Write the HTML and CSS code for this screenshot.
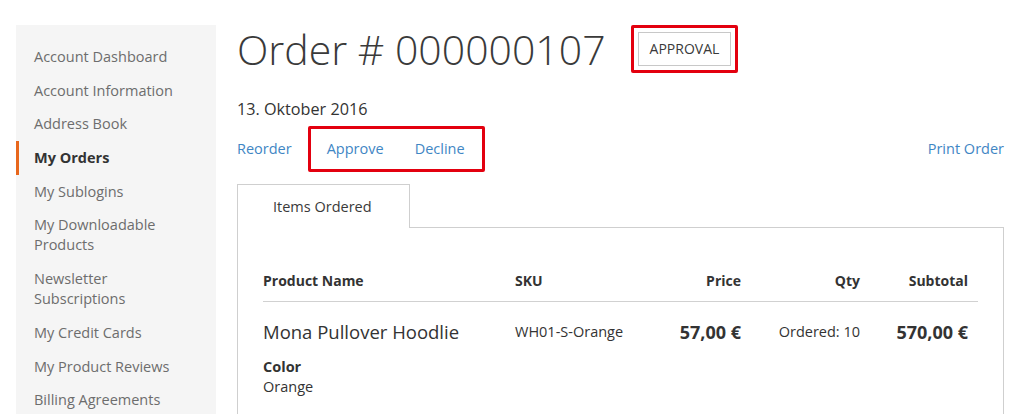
FILE: index.html
```html
<!DOCTYPE html>
<html lang="en">
<head>
<meta charset="utf-8">
<title>Order # 000000107</title>
<link rel="stylesheet" href="styles.css">
</head>
<body>
<div class="page">
  <aside class="sidebar">
    <ul class="nav">
      <li class="nav-item">Account Dashboard</li>
      <li class="nav-item">Account Information</li>
      <li class="nav-item">Address Book</li>
      <li class="nav-item active">My Orders</li>
      <li class="nav-item">My Sublogins</li>
      <li class="nav-item">My Downloadable<br>Products</li>
      <li class="nav-item">Newsletter<br>Subscriptions</li>
      <li class="nav-item">My Credit Cards</li>
      <li class="nav-item">My Product Reviews</li>
      <li class="nav-item">Billing Agreements</li>
    </ul>
  </aside>
  <main class="main">
    <div class="title-row">
      <h1 class="title">Order # 000000107</h1>
      <div class="mark badge-mark"><span class="badge">APPROVAL</span></div>
    </div>
    <div class="date">13. Oktober 2016</div>
    <div class="actions">
      <a class="link">Reorder</a>
      <div class="mark links-mark">
        <a class="link">Approve</a>
        <a class="link">Decline</a>
      </div>
      <a class="link print">Print Order</a>
    </div>
    <div class="tabs">
      <div class="tab">Items Ordered</div>
    </div>
    <div class="tab-content">
      <table class="items">
        <colgroup>
          <col class="c-name"><col class="c-sku"><col class="c-price"><col class="c-qty"><col class="c-sub">
        </colgroup>
        <thead>
          <tr>
            <th class="first">Product Name</th>
            <th>SKU</th>
            <th class="num">Price</th>
            <th class="num">Qty</th>
            <th class="num">Subtotal</th>
          </tr>
        </thead>
        <tbody>
          <tr>
            <td class="first">
              <div class="pname">Mona Pullover Hoodlie</div>
              <div class="opt-label">Color</div>
              <div class="opt-value">Orange</div>
            </td>
            <td class="sku">WH01-S-Orange</td>
            <td class="num price">57,00 €</td>
            <td class="num qty">Ordered: 10</td>
            <td class="num price">570,00 €</td>
          </tr>
        </tbody>
      </table>
    </div>
  </main>
</div>
</body>
</html>
```

FILE: styles.css
```css
* { box-sizing: border-box; }
html, body { margin: 0; padding: 0; background: #fff; }
body {
  font-family: "Open Sans", "DejaVu Sans", sans-serif;
  color: #333;
  font-size: 14.5px;
  line-height: 20px;
  overflow: hidden;
  height: 414px;
}
.page {
  display: flex;
  gap: 21px;
  padding: 25px 20px 0 16px;
}
.sidebar {
  width: 200px;
  flex: none;
  background: #f5f5f5;
  padding: 15px 0 20px;
}
.nav { list-style: none; margin: 0; padding: 0; }
.nav-item {
  padding: 7px 10px 6.7px 15px;
  color: #6d6d6d;
  font-size: 14.5px;
  line-height: 20px;
  border-left: 3px solid transparent;
}
.nav-item.active {
  border-left-color: #e8671c;
  color: #333;
  font-weight: 700;
}
.main { flex: 1; min-width: 0; }
.title-row {
  display: flex;
  align-items: center;
}
.title {
  margin: 0;
  font-size: 41px;
  line-height: 42px;
  font-weight: 300;
  color: #3a3a3a;
}
.mark {
  border: 3px solid #e3000f;
  border-radius: 2px;
}
.badge-mark {
  margin-left: 25px;
  padding: 4px 4px;
}
.badge {
  display: block;
  border: 1px solid #c8c8c8;
  padding: 7px 11px;
  font-size: 14px;
  line-height: 18px;
  color: #3a3a3a;
}
.date {
  margin-top: 24px;
  font-size: 16.2px;
  line-height: 24px;
  color: #333;
}
.actions {
  display: flex;
  align-items: center;
  margin-top: 5px;
}
.link {
  color: #3f86c4;
  font-size: 14.5px;
  line-height: 20px;
}
.links-mark {
  margin-left: 16px;
  display: flex;
  gap: 31px;
  padding: 10px 17px 10px 16px;
}
.print { margin-left: auto; }
.tabs { display: flex; margin-top: 12px; }
.tab {
  border: 1px solid #cfcfcf;
  border-bottom: none;
  background: #fff;
  padding: 12px 0 11px 35px;
  width: 173px;
  font-size: 14.5px;
  line-height: 20px;
  color: #3a3a3a;
  margin-bottom: -1px;
  position: relative;
  z-index: 1;
}
.tab-content {
  border: 1px solid #cfcfcf;
  padding: 33px 26px 40px 25px;
}
.items {
  width: 100%;
  border-collapse: collapse;
  table-layout: fixed;
}
.c-name { width: 242px; }
.c-sku { width: 146px; }
.c-price { width: 100px; }
.c-qty { width: 119px; }
.c-sub { width: 108px; }
.items th {
  text-align: left;
  font-weight: 700;
  font-size: 14px;
  line-height: 20px;
  padding: 10px 10px 10px;
  border-bottom: 1px solid #d1d1d1;
  color: #333;
}
.items td {
  vertical-align: top;
  padding: 18px 10px 10px;
  font-size: 14.5px;
  line-height: 24px;
  color: #333;
}
.items .first { padding-left: 0; }
.items .num { text-align: right; }
.pname {
  font-size: 18.5px;
  line-height: 24px;
  color: #333;
}
.opt-label {
  margin-top: 13px;
  font-weight: 700;
  line-height: 20px;
  font-size: 14.5px;
}
.opt-value { line-height: 20px; }
.items td.price {
  font-size: 18px;
  font-weight: 700;
}
.sku, .qty { color: #444; }
```
